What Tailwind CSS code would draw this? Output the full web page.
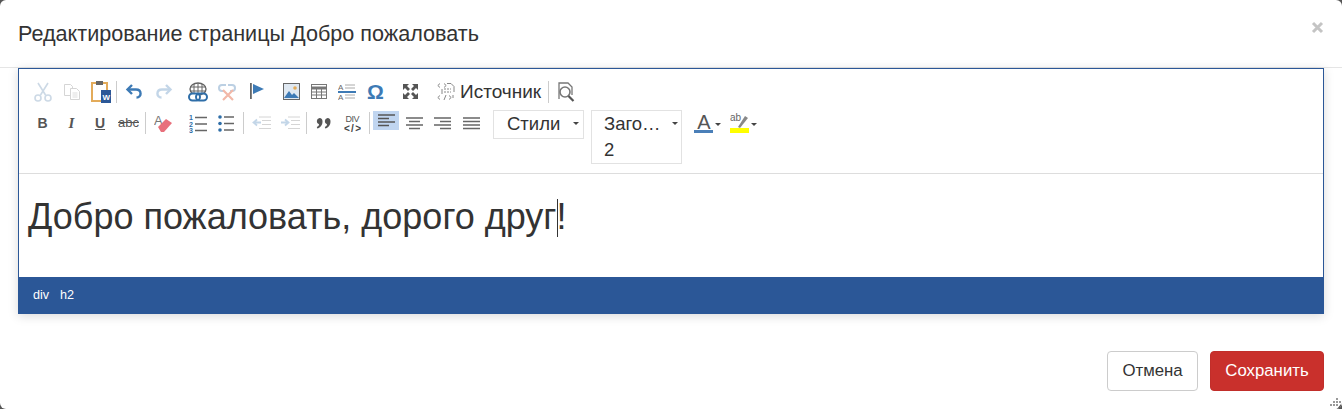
<!DOCTYPE html>
<html lang="ru">
<head>
    <meta charset="UTF-8">
    <title>Редактирование страницы</title>
    <script src="https://cdn.jsdelivr.net/npm/@tailwindcss/browser@4"></script>
</head>
<body class="bg-[#555] h-[409px] overflow-hidden font-['Liberation_Sans',Arial,sans-serif] text-[#333]">
    <div class="relative bg-white rounded-md h-[409px] overflow-hidden">
        <div class="flex items-center justify-between h-[68px] border-b border-[#e5e5e5] pl-[18px] pr-[18px]">
            <h4 class="text-[21.6px] leading-[24px]">Редактирование страницы Добро пожаловать</h4>
            <svg class="mt-[-12px]" width="13" height="13" viewBox="0 0 13 13"><path d="M2 2l9 9M11 2l-9 9" stroke="#c4c4c4" stroke-width="3"/></svg>
        </div>

        <div class="mx-[18px] h-[246px] border-x border-t border-[#2b5797] shadow-[0_2px_10px_rgba(0,0,0,0.15)] flex flex-col">
            <div class="h-[105px] border-b border-[#ddd] pl-[9px] pt-[11px] shrink-0">
                <!-- row 1 -->
                <div class="flex items-center h-[23px]">
                    <div class="w-[29px] flex justify-center opacity-30">
                        <svg width="18" height="20" viewBox="0 0 18 20" fill="none" stroke="#5a84ad" stroke-width="1.6"><path d="M4 1l7.5 12M14 1L6.500 13"/><circle cx="4" cy="16" r="3"/><circle cx="14" cy="16" r="3"/></svg>
                    </div>
                    <div class="w-[29px] flex justify-center opacity-30">
                        <svg width="18" height="18" viewBox="0 0 18 18" fill="#fff" stroke="#777" stroke-width="1"><path d="M1.500 1.500h6l2 2v9h-8z"/><path d="M7.500 5.500h6l3 3v8h-9z"/><path d="M9.500 10h5M9.500 12h5M9.500 14h5" stroke-width=".8"/></svg>
                    </div>
                    <div class="w-[29px] flex justify-center">
                        <svg width="20" height="23" viewBox="0 0 20 23"><rect x="1" y="3" width="15" height="18" fill="#fff" stroke="#e3ab5a" stroke-width="2"/><rect x="5" y="1" width="7" height="4" fill="#666"/><rect x="10" y="10" width="10" height="13" fill="#2b5797"/><text x="11.500" y="20" font-size="8" font-weight="700" fill="#fff" font-family="Liberation Sans">W</text></svg>
                    </div>
                    <div class="w-px h-[22px] bg-[#ccc] ml-[1px] mr-[3px]"></div>
                    <div class="w-[29px] flex justify-center">
                        <svg width="19" height="17" viewBox="0 0 19 17" fill="none" stroke="#3d7ab5" stroke-width="2.400"><path d="M7 2L2.500 6.500 7 11"/><path d="M3 6.500h8c6 0 6 8 .5 8"/></svg>
                    </div>
                    <div class="w-[28px] flex justify-center opacity-30">
                        <svg width="19" height="17" viewBox="0 0 19 17" fill="none" stroke="#3d7ab5" stroke-width="2.400"><path d="M12 2l4.500 4.500L12 11"/><path d="M16 6.500H8c-6 0-6 8-.5 8"/></svg>
                    </div>
                    <div class="w-[6px]"></div>
                    <div class="w-[29px] flex justify-center">
                        <svg width="20" height="20" viewBox="0 0 20 20" fill="none"><ellipse cx="10" cy="7" rx="8" ry="6" fill="#fff" stroke="#666" stroke-width="1.400"/><path d="M2 5h16M2 9h16M10 1v12M6 2v10M14 2v10" stroke="#666"/><rect x="1" y="11.500" width="11" height="7" rx="3.500" stroke="#2f6ea8" stroke-width="2" fill="#fff"/><rect x="8" y="11.500" width="11" height="7" rx="3.500" stroke="#2f6ea8" stroke-width="2"/></svg>
                    </div>
                    <div class="w-[30px] flex justify-center">
                        <svg width="20" height="19" viewBox="0 0 20 19" fill="none"><path d="M9 3H5a3 3 0 0 0 0 6h2M11 3h4a3 3 0 0 1 0 6h-2" stroke="#bcd0e3" stroke-width="2"/><path d="M6 8l10 10M16 8L6 18" stroke="#f2b8a8" stroke-width="2.200"/></svg>
                    </div>
                    <div class="w-[29px] flex justify-center">
                        <svg width="16" height="20" viewBox="0 0 16 20"><rect x="1" y="1" width="1.800" height="16" fill="#666"/><path d="M4 2l11 5L4 12z" fill="#3d7ab5"/></svg>
                    </div>
                    <div class="w-[6px]"></div>
                    <div class="w-[28px] flex justify-center">
                        <svg width="17" height="17" viewBox="0 0 17 17"><rect x=".5" y=".5" width="16" height="16" fill="#dfe8f1" stroke="#666"/><circle cx="12" cy="5" r="1.800" fill="#e3ab5a"/><path d="M1 15l5-7 3 4 2-2 5 5z" fill="#3d7ab5"/></svg>
                    </div>
                    <div class="w-[27px] flex justify-center">
                        <svg width="16" height="15" viewBox="0 0 16 15" fill="#fff" stroke="#777"><rect x=".5" y=".5" width="15" height="14"/><path d="M.5 4h15" stroke-width="3"/><path d="M.5 8h15M.5 11h15M5.500 3v11M10.500 3v11"/></svg>
                    </div>
                    <div class="w-[29px] flex justify-center">
                        <svg width="18" height="18" viewBox="0 0 18 18"><text x="0" y="7" font-size="8" fill="#666" font-family="Liberation Sans">A</text><text x="0" y="17" font-size="8" fill="#666" font-family="Liberation Sans">A</text><path d="M7 2h10M7 5h10M7 12h10M7 15h10" stroke="#aaa" stroke-width="1"/><path d="M0 9h18" stroke="#3d7ab5" stroke-width="2"/></svg>
                    </div>
                    <div class="w-[29px] flex justify-center">
                        <span class="text-[21px] leading-[20px] font-bold text-[#3d7ab5]">Ω</span>
                    </div>
                    <div class="w-[6px]"></div>
                    <div class="w-[29px] flex justify-center">
                        <svg width="17" height="17" viewBox="0 0 17 17" fill="#555"><path d="M1 1h6L5 3l3 3-2 2-3-3-2 2zM16 1v6l-2-2-3 3-2-2 3-3-2-2zM1 16v-6l2 2 3-3 2 2-3 3 2 2zM16 16h-6l2-2-3-3 2-2 3 3 2-2z"/></svg>
                    </div>
                    <div class="w-[20px] ml-[11px] flex justify-center mr-[4px]">
                        <svg width="19" height="20" viewBox="0 0 19 20" fill="none" stroke="#888" stroke-width="1"><path d="M10 1.500h4l3 3V10M5 7v5M16 13v3"/><path d="M7 7h7M7 10h7" stroke-dasharray="2 1"/><path d="M3 1.500L.8 3.500 3 5.500M7 1.500l2.200 2L7 5.500M3 13.500l-2.200 2 2.200 2M12 13.500l2.200 2-2.200 2M9 13l-2 5"/></svg>
                    </div>
                    <span class="text-[19px] leading-[24px] text-[#333]">Источник</span>
                    <div class="w-px h-[22px] bg-[#ccc] ml-[7px] mr-[7px]"></div>
                    <div class="w-[20px] flex justify-center">
                        <svg width="18" height="20" viewBox="0 0 18 20" fill="none" stroke="#777" stroke-width="1.300"><path d="M2 17V1h9l4 4v8"/><circle cx="8" cy="10" r="5" stroke-width="1.600"/><path d="M11.500 14l5 5" stroke-width="2.200" stroke="#555"/></svg>
                    </div>
                </div>
                <!-- row 2 -->
                <div class="flex items-start mt-[9px]">
                    <div class="w-[29px] h-[22px] flex items-center justify-center font-bold text-[14px] text-[#555]">B</div>
                    <div class="w-[29px] h-[22px] flex items-center justify-center italic font-['Liberation_Serif'] font-bold text-[15px] text-[#555]">I</div>
                    <div class="w-[28px] h-[22px] flex items-center justify-center font-bold text-[14px] text-[#555] underline">U</div>
                    <div class="w-[29px] h-[22px] flex items-center justify-center text-[13px] text-[#555] line-through">abc</div>
                    <div class="w-px h-[22px] bg-[#ccc] ml-[2px] mr-[3px]"></div>
                    <div class="w-[29px] h-[22px] flex items-center justify-center">
                        <svg width="19" height="19" viewBox="0 0 19 19"><text x="0" y="11" font-size="13" fill="#777" font-family="Liberation Sans">A</text><path d="M4 13l8-8 6 4-8 9H7z" fill="#e8707c"/></svg>
                    </div>
                    <div class="w-[6px]"></div>
                    <div class="w-[28px] h-[22px] flex items-center justify-center">
                        <svg width="18" height="19" viewBox="0 0 18 19"><text x="0" y="6" font-size="7" font-weight="700" fill="#2f6ea8" font-family="Liberation Sans">1</text><text x="0" y="12.500" font-size="7" font-weight="700" fill="#2f6ea8" font-family="Liberation Sans">2</text><text x="0" y="19" font-size="7" font-weight="700" fill="#2f6ea8" font-family="Liberation Sans">3</text><path d="M6 3.500h12M6 10h12M6 16.500h12" stroke="#666" stroke-width="1.400"/></svg>
                    </div>
                    <div class="w-[28px] h-[22px] flex items-center justify-center">
                        <svg width="16" height="17" viewBox="0 0 16 17"><circle cx="2" cy="2" r="1.800" fill="#2f6ea8"/><circle cx="2" cy="8.500" r="1.800" fill="#2f6ea8"/><circle cx="2" cy="15" r="1.800" fill="#2f6ea8"/><path d="M6 2h10M6 8.500h10M6 15h10" stroke="#666" stroke-width="1.400"/></svg>
                    </div>
                    <div class="w-px h-[22px] bg-[#ccc] ml-[3px] mr-[3px]"></div>
                    <div class="w-[29px] h-[22px] flex items-center justify-center opacity-30">
                        <svg width="19" height="14" viewBox="0 0 19 14" fill="none" stroke="#777"><path d="M7 1h12M10 4.500h9M10 8.500h9M7 12.500h12"/><path d="M9 6.500H2M5 3.500L1.500 6.500 5 9.500" stroke="#3d7ab5" stroke-width="1.800"/></svg>
                    </div>
                    <div class="w-[28px] h-[22px] flex items-center justify-center opacity-30">
                        <svg width="19" height="14" viewBox="0 0 19 14" fill="none" stroke="#777"><path d="M7 1h12M10 4.500h9M10 8.500h9M7 12.500h12"/><path d="M0 6.500h7M4 3.500l3.500 3L4 9.500" stroke="#3d7ab5" stroke-width="1.800"/></svg>
                    </div>
                    <div class="w-px h-[22px] bg-[#ccc] ml-[2px] mr-[2px]"></div>
                    <div class="w-[29px] h-[22px] flex items-center justify-center">
                        <svg width="15" height="11" viewBox="0 0 15 11" fill="#555"><path d="M3.500 0A3.200 3.200 0 0 0 3 6.200C3 7.500 2 8.500.8 9l.5 1.500C4 10 6.500 7.500 6.500 3.500 6.500 1.500 5.500 0 3.500 0zM11.500 0A3.200 3.200 0 0 0 11 6.200c0 1.300-1 2.300-2.200 2.800l.5 1.500c2.700-.5 5.200-3 5.200-7C14.500 1.500 13.500 0 11.500 0z"/></svg>
                    </div>
                    <div class="w-[29px] h-[22px] flex items-center justify-center">
                        <svg width="17" height="19" viewBox="0 0 17 19"><text x="1.500" y="7.500" font-size="9" fill="#555" font-family="Liberation Sans" textLength="14">DIV</text><text x="0" y="18" font-size="10" font-weight="700" fill="#444" font-family="Liberation Sans" textLength="17">&lt;/&gt;</text></svg>
                    </div>
                    <div class="w-px h-[22px] bg-[#ccc] ml-[2px] mr-[3px]"></div>
                    <div class="w-[26px] h-[19px] mt-[-1px] bg-[#c0d5f0] flex items-center justify-center">
                        <svg width="17" height="13" viewBox="0 0 17 13" stroke="#555" stroke-width="1.400"><path d="M0 1h17M0 4.500h11M0 8h17M0 11.500h11"/></svg>
                    </div>
                    <div class="w-[28px] ml-[1px] h-[22px] flex items-center justify-center">
                        <svg width="17" height="13" viewBox="0 0 17 13" stroke="#666" stroke-width="1.400"><path d="M0 1h17M3 4.500h11M0 8h17M3 11.500h11"/></svg>
                    </div>
                    <div class="w-[29px] h-[22px] flex items-center justify-center">
                        <svg width="17" height="13" viewBox="0 0 17 13" stroke="#666" stroke-width="1.400"><path d="M0 1h17M6 4.500h11M0 8h17M6 11.500h11"/></svg>
                    </div>
                    <div class="w-[29px] h-[22px] flex items-center justify-center">
                        <svg width="17" height="13" viewBox="0 0 17 13" stroke="#666" stroke-width="1.400"><path d="M0 1h17M0 4.500h17M0 8h17M0 11.500h17"/></svg>
                    </div>
                    <div class="w-[91px] h-[29px] ml-[7px] mt-[-2px] border border-[#e2e2e2] relative pl-[13px] text-[18.500px] leading-[26px]">
                        Стили
                        <span class="absolute right-[4px] top-[11px] border-x-[3px] border-x-transparent border-t-[3px] border-t-[#444]"></span>
                    </div>
                    <div class="w-[91px] h-[54px] ml-[7px] mt-[-2px] border border-[#e2e2e2] relative pl-[12px] pr-[20px] text-[18.500px] leading-[26px]">
                        Заго…<br>2
                        <span class="absolute right-[3px] top-[11px] border-x-[3px] border-x-transparent border-t-[3px] border-t-[#444]"></span>
                    </div>
                    <div class="flex justify-center w-[20px] h-[21px] ml-[12px] relative">
                        <span class="text-[20px] leading-[21px] text-[#555]">A</span>
                        <span class="absolute left-0 bottom-0 w-[19px] h-[3px] bg-[#4a7fb8]"></span>
                    </div>
                    <span class="border-x-[3px] border-x-transparent border-t-[3px] border-t-[#444] mt-[11px] ml-[1px] mr-[9px]"></span>
                    <div class="w-[20px] h-[22px] relative">
                        <svg width="20" height="22" viewBox="0 0 20 22"><text x="0" y="9" font-size="10" fill="#666" font-family="Liberation Sans">ab</text><path d="M8 15l7-11 3 2-8 10z" fill="#888"/><rect x="0" y="16" width="19" height="5" fill="#ff0"/></svg>
                    </div>
                    <span class="border-x-[3px] border-x-transparent border-t-[3px] border-t-[#444] mt-[11px] ml-[1px]"></span>
                </div>
            </div>
            <div class="flex-1 pl-[9px] pt-[23px] text-[36px] leading-[40px] text-[#333]">
                <h2 class="whitespace-nowrap">Добро пожаловать, дорого друг<span class="inline-block w-px h-[38px] bg-[#333] align-[-8px] mr-[-1px]"></span>!</h2>
            </div>
            <div class="h-[37px] bg-[#2b5797] text-white text-[12.600px] flex items-center pl-[15px] gap-[11px] shrink-0 mx-[-1px] pb-[1px]">
                <span>div</span><span>h2</span>
            </div>
        </div>

        <div class="flex justify-end gap-[12px] pr-[18px] mt-[37px]">
            <div class="w-[91px] h-[40px] border border-[#ccc] rounded flex items-center justify-center text-[16.800px] bg-white">Отмена</div>
            <div class="w-[114px] h-[40px] border border-[#c12e2a] bg-[#c9302c] rounded flex items-center justify-center text-[16.800px] text-white">Сохранить</div>
        </div>

        <svg class="absolute right-0 bottom-0" width="13" height="13" viewBox="0 0 13 13" fill="#999"><rect x="7" y="2" width="2" height="2"/><rect x="4" y="5" width="2" height="2"/><rect x="7" y="5" width="2" height="2"/><rect x="10" y="5" width="2" height="2" /><rect x="1" y="8" width="2" height="2"/><rect x="4" y="8" width="2" height="2"/><rect x="7" y="8" width="2" height="2"/><path d="M12 8v5H8z" fill="#555"/></svg>
    </div>
</body>
</html>
